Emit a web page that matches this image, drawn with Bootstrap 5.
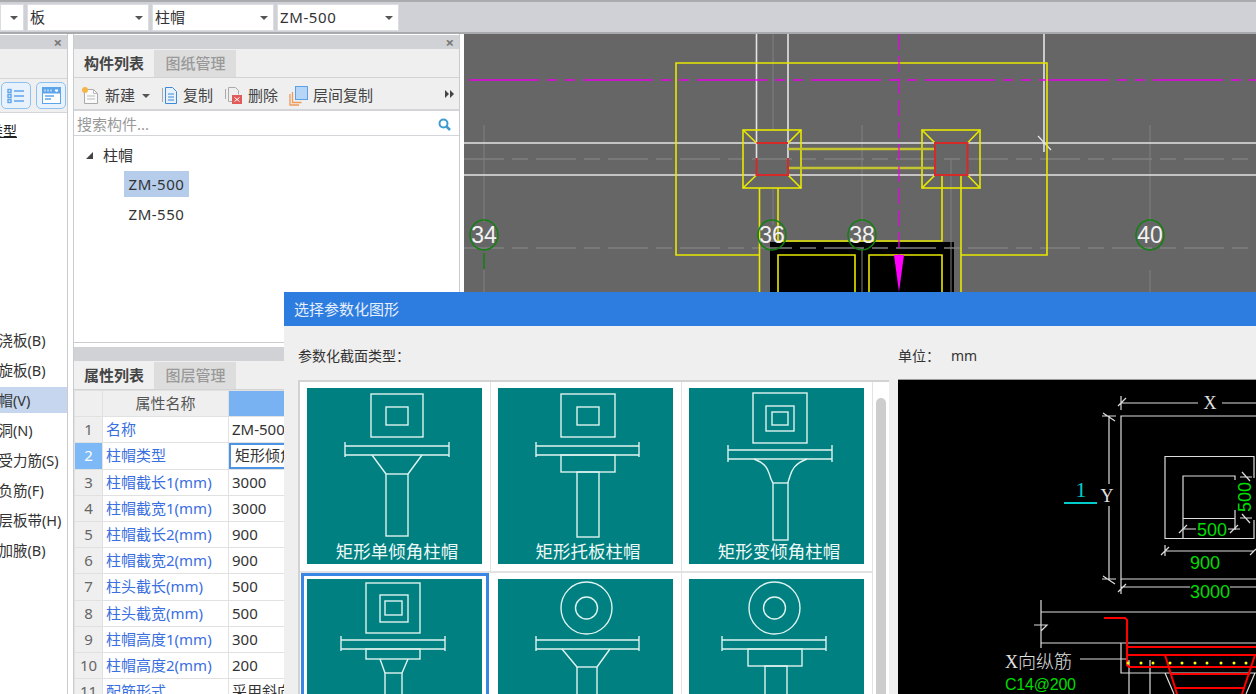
<!DOCTYPE html>
<html lang="en">
<head>
  <meta charset="UTF-8" />
  <title>选择参数化图形</title>
  <link href="https://cdn.jsdelivr.net/npm/bootstrap@5.3.3/dist/css/bootstrap.min.css" rel="stylesheet"/>
  <style>
    html, body { height: 694px; overflow: hidden; }
    body { font-family: "Noto Sans", "Noto Sans CJK SC", sans-serif; font-size: 14.5px; color: #333; background: #fff; position: relative; }

    .top-strip { height: 34px; background: #cfd1d6; border-top: 2px solid #a9abaf; border-bottom: 2px solid #a8aaae; padding-top: 2px; gap: 3px; }
    .combo { height: 27px; background: #fff; width: 122px; padding: 0 5px 0 2px; font-size: 15px; line-height: 1; border: 1px solid #dcdde0; }
    .combo-stub { width: 24px; }
    .caret-down { width: 0; height: 0; border-left: 4px solid transparent; border-right: 4px solid transparent; border-top: 4px solid #555; }
    .latin-wide { letter-spacing: .6px; }

    .work-row { height: 660px; }
    .left-pane { width: 68px; overflow: hidden; border-right: 1px solid #c9cbcf; }
    .mid-pane { width: 387px; margin-left: 5px; margin-right: 4px; border-left: 1px solid #c9cbcf; border-right: 1px solid #c9cbcf; }
    .canvas-pane { width: 792px; height: 660px; background: #666; flex: none; }
    .canvas-pane svg { display: block; }

    .dock-bar { height: 14px; margin-top: 1px; background: #d0d2d6; color: #777; font-size: 15px; line-height: 14px; text-align: right; padding-right: 5px; font-weight: 700; }
    .tab-row { height: 29px; background: #efefef; border-bottom: 1px solid #d3d3d3; padding-top: 1px; }
    .tab-on, .tab-off { width: 81px; font-size: 15px; text-align: center; line-height: 27px; }
    .tab-on { font-weight: 700; color: #444; background: #f0f0f0; border-right: 1px solid #dcdcdc; }
    .tab-off { color: #999; background: #dddddd; font-weight: 500; }

    .tool-row { height: 33px; background: #efefef; border-bottom: 2px solid #d3d5d8; font-size: 15px; color: #444; padding: 4px 0 0 7px; }
    .tool-item { gap: 5px; margin-right: 11px; }
    .new-caret { margin-left: 2px; }
    .find-box { height: 24px; margin-top: 1px; padding: 2px 8px 0 3px; font-size: 15px; color: #999; border-bottom: 1px solid #d3d5d8; }
    .tree-box { height: 207px; border-bottom: 1px solid #c9cbcf; font-size: 15px; }
    .tree-head { padding: 8px 0 0 12px; gap: 10px; height: 35px; }
    .tree-arrow { width: 0; height: 0; border-left: 7px solid transparent; border-bottom: 7px solid #444; }
    .tree-leaf { margin-left: 50px; width: 65px; height: 26px; line-height: 27px; text-align: center; margin-bottom: 4px; letter-spacing: .5px; }
    .tree-leaf-on { background: #b5cdeb; }

    .left-tools { height: 34px; background: #efefef; border-bottom: 1px solid #d3d5d8; padding-left: 1px; gap: 5px; }
    .left-btn { width: 30px; height: 27px; background: #e8f2fd; border: 1px solid #8ec1f2; border-radius: 5px; }
    .left-head { height: 30px; background: #efefef; border-bottom: 1px solid #d3d5d8; }
    .left-type { padding-top: 7px; height: 214px; text-indent: -11px; text-decoration: underline; font-size: 14px; color: #222; }
    .left-item { height: 30px; line-height: 26px; text-indent: -16px; font-size: 14.5px; white-space: nowrap; }
    .left-item-on { background: #c5d6ee; height: 26px; margin-bottom: 4px; }

    .prop-table { width: 386px; table-layout: fixed; border-collapse: collapse; margin: 0; font-size: 15px; }
    .prop-table td, .prop-table th { height: 26.2px; padding: 0 3px; border: 1px solid #e1e1e1; white-space: nowrap; overflow: hidden; font-weight: 400; line-height: 1; }
    .row-no { background: #efefef; color: #666; text-align: center; }
    .row-no-on { background: #7db9f6; color: #fff; font-weight: 700; text-align: center; }
    .prop-name { color: #3a6fe0; }
    .head-name { background: #efefef; color: #555; text-align: center; }
    .head-val { background: #79b2f2; }
    .val-on { box-shadow: inset 0 0 0 2px #4d93e3; padding-left: 6px !important; }

    .param-dialog { left: 284px; top: 292px; width: 972px; height: 402px; background: #efefef; overflow: hidden; }
    .dlg-title { height: 34px; background: #2d7de0; color: #e6effb; font-size: 15px; line-height: 34px; padding-left: 10px; }
    .dlg-label { height: 54px; padding: 21px 0 0 14px; font-size: 14px; line-height: 1.3; color: #333; }
    .shape-frame { margin-left: 14px; width: 591px; height: 320px; background: #fff; border-top: 2px solid #d2d2d2; border-left: 2px solid #d2d2d2; }
    .shape-grid { display: grid; grid-template-columns: repeat(3, 191px); grid-auto-rows: 191px; width: 573px; flex: none; }
    .shape-cell { padding: 6px 0 0 7px; border-right: 1px solid #e2e2e2; border-bottom: 2px solid #e2e2e2; }
    .shape-cell svg { display: block; background: #008080; }
    .shape-cell-on { padding: 6px 0 0 6px; margin: 0 2px 0 1px; border: 0; box-shadow: inset 3px 3px 0 #3a86e4, inset -3px 0 0 #3a86e4; }
    .shape-cell line, .shape-cell rect, .shape-cell path, .shape-cell ellipse { fill: none; stroke: #dff3f0; stroke-width: 1.4; }
    .shape-cell text { fill: #eef8f6; font-size: 17.5px; text-anchor: middle; }
    .scroll-track { flex: 1; padding: 16px 3px 0 3px; }
    .scroll-thumb { background: #cdcdcd; height: 300px; border-radius: 5px; }
    .unit-col { margin-left: 9px; }
    .unit-label { height: 53px; padding-top: 21px; font-size: 14px; line-height: 1.3; color: #333; }
    .unit-label span { margin-left: 11px; }
    .preview-box { width: 358px; height: 315px; background: #000; border-top: 1px solid #999; }
    .preview-box svg { display: block; }
    .cad-green { fill: #00dc00; font-family: "Liberation Sans", sans-serif; }
    .cad-white { fill: #e2e2e2; font-family: "Liberation Serif", serif; }
  </style>
</head>
<body>

  <div class="top-strip d-flex">
    <div class="combo combo-stub d-flex align-items-center justify-content-end"><span class="caret-down"></span></div>
    <div class="combo d-flex align-items-center justify-content-between"><span>板</span><span class="caret-down"></span></div>
    <div class="combo d-flex align-items-center justify-content-between"><span>柱帽</span><span class="caret-down"></span></div>
    <div class="combo d-flex align-items-center justify-content-between"><span class="latin-wide">ZM-500</span><span class="caret-down"></span></div>
  </div>

  <div class="work-row d-flex">
    <!-- left nav -->
    <div class="left-pane flex-shrink-0">
      <div class="dock-bar">×</div>
      <div class="left-head"></div>
      <div class="left-tools d-flex align-items-center">
        <div class="left-btn d-flex align-items-center justify-content-center">
          <svg width="18" height="16" viewBox="0 0 18 16"><g fill="none" stroke="#5ca5ea" stroke-width="1.4"><rect x="1" y="1.5" width="3" height="3"/><rect x="1" y="6.5" width="3" height="3"/><rect x="1" y="11.5" width="3" height="3"/><path d="M7 3h10M7 8h10M7 13h10"/></g></svg>
        </div>
        <div class="left-btn d-flex align-items-center justify-content-center">
          <svg width="19" height="17" viewBox="0 0 19 17"><rect x=".5" y=".5" width="18" height="16" fill="#fff" stroke="#5ca5ea"/><rect x=".5" y=".5" width="18" height="6" fill="#5ca5ea"/><path d="M3 2.500v2M6 2.500v2M9 2.500v2M13 3h3l-1.500 2z" stroke="#fff" fill="#fff"/><path d="M3 9h9M3 12h6" stroke="#5ca5ea" stroke-width="1.4"/></svg>
        </div>
      </div>
      <div class="left-type">类型</div>
      <div class="left-item">现浇板(B)</div>
      <div class="left-item">螺旋板(B)</div>
      <div class="left-item left-item-on">柱帽(V)</div>
      <div class="left-item">板洞(N)</div>
      <div class="left-item">板受力筋(S)</div>
      <div class="left-item">板负筋(F)</div>
      <div class="left-item">楼层板带(H)</div>
      <div class="left-item">板加腋(B)</div>
    </div>

    <!-- component list + property list -->
    <div class="mid-pane flex-shrink-0">
      <div class="dock-bar">×</div>
      <div class="tab-row d-flex">
        <div class="tab-on">构件列表</div>
        <div class="tab-off">图纸管理</div>
      </div>
      <div class="tool-row d-flex align-items-center position-relative">
        <div class="tool-item d-flex align-items-center">
          <svg width="19" height="19" viewBox="0 0 19 19"><path d="M3.500 3.500h9l4 4v10h-13z" fill="#fafafa" stroke="#aaa"/><path d="M12.500 3.500v4h4M6 10h8M6 13h8" fill="none" stroke="#bbb"/><circle cx="4" cy="4" r="3" fill="#f5b44a"/></svg>
          <span>新建</span><span class="caret-down new-caret"></span>
        </div>
        <div class="tool-item d-flex align-items-center">
          <svg width="17" height="19" viewBox="0 0 17 19"><path d="M1.500 2v14" stroke="#aaa" fill="none"/><path d="M4.500 1.500h7l4 4v12h-11z" fill="#e6f1fb" stroke="#3f8ad8"/><path d="M7 8h6M7 11h6M7 14h6" stroke="#3f8ad8"/></svg>
          <span>复制</span>
        </div>
        <div class="tool-item d-flex align-items-center">
          <svg width="19" height="19" viewBox="0 0 19 19"><path d="M1.500 3v10M4.500 1.500h7l3 3v4M4.500 1.500v14h4" fill="none" stroke="#aaa"/><rect x="8" y="9" width="10" height="9" fill="#e05a5a"/><path d="M10.500 11.500l5 4M15.500 11.500l-5 4" stroke="#fff"/></svg>
          <span>删除</span>
        </div>
        <div class="tool-item d-flex align-items-center">
          <svg width="19" height="20" viewBox="0 0 19 20"><path d="M1 8v11h9M3.500 6v10.500h9" fill="none" stroke="#f09a55" stroke-width="1.300"/><rect x="6.500" y=".5" width="12" height="13" fill="#b7d6f7" stroke="#5aa1e8"/></svg>
          <span>层间复制</span>
        </div>
        <svg class="position-absolute top-50 end-0 translate-middle-y me-1" width="10" height="8" viewBox="0 0 10 8"><path d="M0 0l4 4-4 4zM5 0l4 4-4 4z" fill="#444"/></svg>
      </div>
      <div class="find-box d-flex align-items-center justify-content-between">
        <span>搜索构件...</span>
        <svg width="13" height="13" viewBox="0 0 13 13"><circle cx="5.500" cy="5.500" r="4" fill="none" stroke="#3c9bd0" stroke-width="2"/><path d="M8.500 8.500l3.500 3.500" stroke="#3c9bd0" stroke-width="2.500"/></svg>
      </div>
      <div class="tree-box">
        <div class="tree-head d-flex"><span class="tree-arrow mt-2"></span><span>柱帽</span></div>
        <div class="tree-leaf tree-leaf-on">ZM-500</div>
        <div class="tree-leaf">ZM-550</div>
      </div>
      <div class="dock-bar mt-1"></div>
      <div class="tab-row d-flex">
        <div class="tab-on">属性列表</div>
        <div class="tab-off">图层管理</div>
      </div>
      <table class="prop-table">
        <colgroup><col style="width:28px"><col style="width:126px"><col></colgroup>
        <tr><td class="row-no"></td><td class="head-name">属性名称</td><td class="head-val"></td></tr>
        <tr><td class="row-no">1</td><td class="prop-name">名称</td><td>ZM-500</td></tr>
        <tr><td class="row-no-on">2</td><td class="prop-name">柱帽类型</td><td class="val-on">矩形倾角柱帽</td></tr>
        <tr><td class="row-no">3</td><td class="prop-name">柱帽截长1(mm)</td><td>3000</td></tr>
        <tr><td class="row-no">4</td><td class="prop-name">柱帽截宽1(mm)</td><td>3000</td></tr>
        <tr><td class="row-no">5</td><td class="prop-name">柱帽截长2(mm)</td><td>900</td></tr>
        <tr><td class="row-no">6</td><td class="prop-name">柱帽截宽2(mm)</td><td>900</td></tr>
        <tr><td class="row-no">7</td><td class="prop-name">柱头截长(mm)</td><td>500</td></tr>
        <tr><td class="row-no">8</td><td class="prop-name">柱头截宽(mm)</td><td>500</td></tr>
        <tr><td class="row-no">9</td><td class="prop-name">柱帽高度1(mm)</td><td>300</td></tr>
        <tr><td class="row-no">10</td><td class="prop-name">柱帽高度2(mm)</td><td>200</td></tr>
        <tr><td class="row-no">11</td><td class="prop-name">配筋形式</td><td>采用斜向筋</td></tr>
      </table>
    </div>

    <!-- drawing canvas -->
    <div class="canvas-pane">
      <svg width="792" height="660" viewBox="464 34 792 660" font-family="'Liberation Sans',sans-serif">
        <!-- axis lines -->
        <g stroke="#808080" fill="none">
          <path d="M484 125V222M484 270V292M773 34V130M862 125V222M1150 125V222M1150 270V292M773 188V225"/>
          <path d="M464 159H1256" stroke-dasharray="40 8 16 8" stroke-width="1.500"/>
        </g>
        <g stroke="#e4e4e4" fill="none" stroke-width="1.600">
          <path d="M464 143H1256M464 175H1256"/>
          <path d="M756.500 34V158M788 34V158M1044 34V152"/>
          <path d="M1038 136L1051 150" stroke-width="1.300"/>
        </g>
        <path d="M469 80H1256" stroke="#e800e8" stroke-width="1.500" stroke-dasharray="70 8 10 8 10 8" fill="none"/>
        <!-- black void -->
        <rect x="770" y="242" width="184" height="50" fill="#000"/>
        <g stroke="#808080" fill="none">
          <path d="M464 248H1256" stroke-dasharray="40 8 16 8" stroke-width="1.500"/>
          <path d="M862 248V292M951 159V292"/>
        </g>
        <!-- cap outline -->
        <g stroke="#e8e800" fill="none" stroke-width="1.600">
          <path d="M759.500 255H676V63H1047V255H961"/>
          <path d="M759.500 188V292M778 188V241H942V175M961 175V292"/>
          <rect x="743" y="130" width="58" height="58"/>
          <rect x="922" y="130" width="58" height="58"/>
          <path d="M743 130L756.500 143M801 130L788 143M743 188L756.500 175M801 188L788 175"/>
          <path d="M922 130L935 143M980 130L967.500 143M922 188L935 175M980 188L967.500 175"/>
          <path d="M778 292V255H855V292M869 292V255H942V292"/>
        </g>
        <path d="M788 149H935M788 168H935" stroke="#c4c430" stroke-width="2.500" fill="none"/>
        <path d="M756.500 143H788M756.500 158V175H788V158M935 143H967.500V175H935Z" stroke="#d42a2a" stroke-width="2" fill="none"/>
        <path d="M899 34V255" stroke="#e800e8" stroke-dasharray="16 6" stroke-width="1.200" fill="none"/>
        <path d="M894 255H904L899 292Z" fill="#f0f"/>
        <!-- axis bubbles -->
        <g fill="none" stroke="#128012" stroke-width="1.500">
          <ellipse cx="484" cy="235" rx="14" ry="15"/><ellipse cx="772" cy="235" rx="14" ry="15"/>
          <ellipse cx="862" cy="235" rx="14" ry="15"/><ellipse cx="1150" cy="235" rx="14" ry="15"/>
          <path d="M484 253V269"/>
        </g>
        <g fill="#f2f2f2" font-size="23" text-anchor="middle">
          <text x="484" y="243">34</text><text x="772" y="243">36</text>
          <text x="862" y="243">38</text><text x="1150" y="243">40</text>
        </g>
      </svg>
    </div>
  </div>

  <!-- parameter dialog -->
  <div class="param-dialog position-absolute">
    <div class="dlg-title">选择参数化图形</div>
    <div class="d-flex">
      <div>
        <div class="dlg-label">参数化截面类型：</div>
        <div class="shape-frame d-flex">
          <div class="shape-grid">
            <div class="shape-cell">
              <svg width="175" height="176" viewBox="0 0 175 176">
                <rect x="64" y="6" width="52" height="43"/><rect x="79" y="19" width="22" height="18"/>
                <path d="M38 58H142M38 67H142M38 54V69M142 54V69"/>
                <path d="M65 67L79 86M115 67L101 86"/><rect x="79" y="86" width="22" height="62"/>
                <text x="90" y="170">矩形单倾角柱帽</text>
              </svg>
            </div>
            <div class="shape-cell">
              <svg width="175" height="176" viewBox="0 0 175 176">
                <rect x="63" y="6" width="54" height="43"/><rect x="79" y="19" width="22" height="18"/>
                <path d="M38 58H141M38 67H141M38 54V69M141 54V69"/>
                <rect x="63" y="67" width="54" height="17"/><rect x="79" y="84" width="22" height="65"/>
                <text x="90" y="170">矩形托板柱帽</text>
              </svg>
            </div>
            <div class="shape-cell">
              <svg width="175" height="176" viewBox="0 0 175 176">
                <rect x="64" y="5" width="54" height="50"/><rect x="77" y="18" width="28" height="25"/><rect x="83" y="24" width="16" height="13"/>
                <path d="M39 62H143M39 71H143M39 57V74M143 57V74"/>
                <path d="M65 71C78 76 79 82 81 88C82 92 83 93 84 95M118 71C105 76 103 82 101 88C100 92 99 93 99 95"/>
                <rect x="84" y="95" width="15" height="57"/>
                <text x="90" y="170">矩形变倾角柱帽</text>
              </svg>
            </div>
            <div class="shape-cell shape-cell-on">
              <svg width="175" height="176" viewBox="0 0 175 176">
                <rect x="59" y="4" width="54" height="50"/><rect x="73" y="16" width="28" height="27"/><rect x="78" y="22" width="17" height="14"/>
                <path d="M34 61H138M34 70H138M34 57V72M138 57V72"/>
                <rect x="59" y="70" width="54" height="10"/><path d="M73 80L78 94M101 80L95 94"/>
                <rect x="78" y="94" width="17" height="60"/>
              </svg>
            </div>
            <div class="shape-cell">
              <svg width="175" height="176" viewBox="0 0 175 176">
                <ellipse cx="88.500" cy="29" rx="25.500" ry="26"/><ellipse cx="88.500" cy="29" rx="11" ry="11"/>
                <path d="M38 61H141M38 70H141M38 57V72M141 57V72"/>
                <path d="M64 70L79 88M112 70L99 88"/><rect x="79" y="88" width="20" height="60"/>
              </svg>
            </div>
            <div class="shape-cell">
              <svg width="175" height="176" viewBox="0 0 175 176">
                <ellipse cx="85.500" cy="29" rx="25.500" ry="26"/><ellipse cx="85.500" cy="29" rx="11" ry="11"/>
                <path d="M33 61H137M33 70H137M33 57V72M137 57V72"/>
                <rect x="59" y="70" width="54" height="17"/><rect x="76" y="87" width="22" height="60"/>
              </svg>
            </div>
          </div>
          <div class="scroll-track"><div class="scroll-thumb"></div></div>
        </div>
      </div>
      <div class="unit-col">
        <div class="unit-label">单位：<span>mm</span></div>
        <div class="preview-box">
          <svg width="358" height="314" viewBox="898 380 358 314">
            <g stroke="#ddd" fill="none" stroke-width="1.200">
              <path d="M1256 403H1222M1198 403H1121M1121 396V410M1118 406L1126 398"/>
              <path d="M1256 416H1121V579H1256"/>
              <path d="M1109 416V484M1109 506V579M1102 416H1116M1102 579H1116M1103 413L1115 421M1103 576L1115 584"/>
              <path d="M1121 579V594M1121 587H1190M1230 587H1256M1118 592L1126 584"/>
              <path d="M1254 478V456.500H1165V538.500H1254V520"/>
              <path d="M1235 480V476H1183V539M1183 518.500H1235V510M1235 518V530"/>
              <path d="M1183 529H1196M1228 529H1240M1179 533L1187 525M1230 533L1238 525"/>
              <path d="M1165 545V556M1165 551H1254M1161 555L1169 547M1250 555L1256 549"/>
              <path d="M1240 477H1252M1240 518H1252M1242 472L1250 481M1242 514L1250 523"/>
              <path d="M1041 600V648M1041 612H1256M1041 643H1256M1034 625H1047L1041 631"/>
              <path d="M1121 643V673H1256M1080 659H1127M1129 660V694M1150 660V694M1165 673L1174 694M1255 673L1246 694"/>
            </g>
            <path d="M1064 503H1097" stroke="#0cc" stroke-width="2"/>
            <g fill="none" stroke="#f00" stroke-width="2">
              <path d="M1104 618H1125L1127 620V665L1129 667H1256"/>
              <path d="M1127 647H1256M1127 655H1256"/>
              <path d="M1165 655L1177 694M1255 655L1242 694M1170 674H1250M1175 688H1245"/>
            </g>
            <g fill="#ff0">
              <circle cx="1128" cy="663" r="1.500"/><circle cx="1141" cy="663" r="1.500"/><circle cx="1153" cy="663" r="1.500"/><circle cx="1170" cy="663" r="1.500"/><circle cx="1182" cy="663" r="1.500"/>
              <circle cx="1195" cy="663" r="1.500"/><circle cx="1207" cy="663" r="1.500"/><circle cx="1221" cy="663" r="1.500"/><circle cx="1234" cy="663" r="1.500"/><circle cx="1246" cy="663" r="1.500"/>
            </g>
            <text x="1081" y="497" fill="#0cc" font-size="22" text-anchor="middle" font-family="'Liberation Serif',serif">1</text>
            <text class="cad-white" x="1107" y="502" font-size="18" text-anchor="middle">Y</text>
            <text class="cad-white" x="1210" y="409" font-size="18" text-anchor="middle">X</text>
            <text class="cad-white" x="1005" y="668" font-size="18">X<tspan font-family="'Noto Sans CJK SC',sans-serif" font-weight="300">向纵筋</tspan></text>
            <text class="cad-green" x="1212" y="536" font-size="18" text-anchor="middle">500</text>
            <text class="cad-green" x="1205" y="569" font-size="18" text-anchor="middle">900</text>
            <text class="cad-green" x="1210" y="598" font-size="18" text-anchor="middle">3000</text>
            <text class="cad-green" transform="translate(1251 497) rotate(-90)" font-size="18" text-anchor="middle">500</text>
            <text class="cad-green" x="1005" y="690" font-size="16" textLength="71">C14@200</text>
          </svg>
        </div>
      </div>
    </div>
  </div>

  <script src="https://cdn.jsdelivr.net/npm/bootstrap@5.3.3/dist/js/bootstrap.bundle.min.js"></script>
</body>
</html>
